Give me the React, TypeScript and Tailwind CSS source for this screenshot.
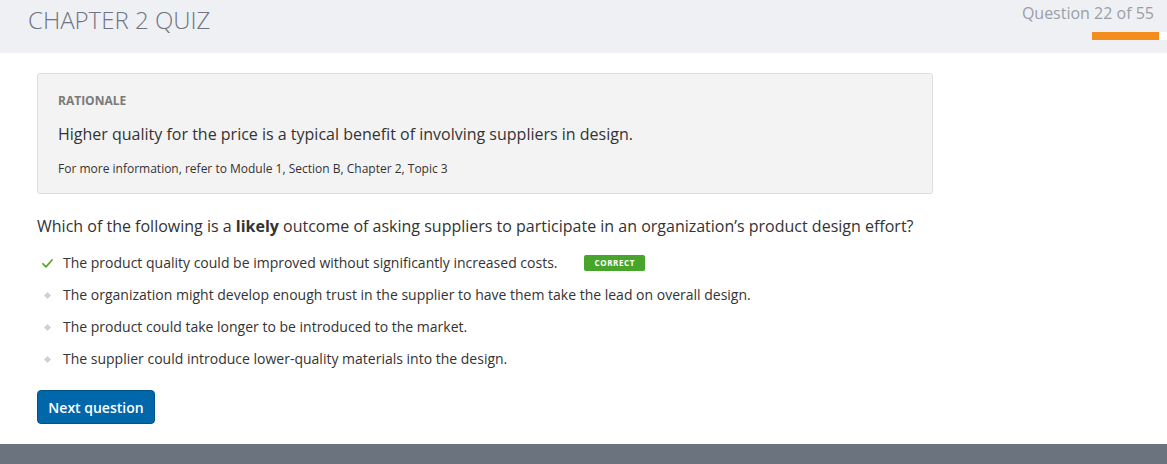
const options = [
  {
    text: "The product quality could be improved without significantly increased costs.",
    correct: true,
  },
  {
    text: "The organization might develop enough trust in the supplier to have them take the lead on overall design.",
    correct: false,
  },
  {
    text: "The product could take longer to be introduced to the market.",
    correct: false,
  },
  {
    text: "The supplier could introduce lower-quality materials into the design.",
    correct: false,
  },
];

const CheckIcon = () => (
  <span className="flex h-3 w-[14px] shrink-0 items-center justify-center">
    <svg width="11" height="9" viewBox="0 0 11 9">
      <path
        d="M1 4.8 L4 7.8 L10 1"
        fill="none"
        stroke="#5fa82d"
        strokeWidth="1.8"
        strokeLinecap="round"
        strokeLinejoin="round"
      />
    </svg>
  </span>
);

const Bullet = () => (
  <span className="flex h-3 w-[14px] shrink-0 items-center justify-center">
    <span className="block h-[5px] w-[5px] rotate-45 bg-[#d2d2d2]" />
  </span>
);

export default function App() {
  return (
    <div className="flex h-[464px] w-full flex-col bg-white font-['Open_Sans',sans-serif]">
      <header className="flex h-[53px] shrink-0 items-start justify-between overflow-hidden bg-[#eff0f4]">
        <h1 className="pl-[28px] pt-[6px] text-[24px] font-light leading-[28px] text-[#6e7480]">
          CHAPTER 2 QUIZ
        </h1>
        <div className="flex flex-col items-end pt-[3px]">
          <span className="pr-[13px] text-[16px] leading-[20px] text-[#9a9ea6]">
            Question 22 of 55
          </span>
          <div className="mt-[9px] flex h-[8px] w-[75px]">
            <div className="h-full w-[67px] bg-[#f48c1e]" />
            <div className="h-full flex-1 bg-white" />
          </div>
        </div>
      </header>

      <main className="flex-1 px-[37px] pt-[20px]">
        <section className="w-[896px] rounded-[3px] border border-[#dedede] bg-[#f3f3f3] px-[20px] pb-[16px] pt-[19px]">
          <div className="text-[12px] font-bold leading-[16px] text-[#7a7a7a]">
            RATIONALE
          </div>
          <p className="mt-[14px] text-[16px] leading-[22px] text-[#333]">
            Higher quality for the price is a typical benefit of involving
            suppliers in design.
          </p>
          <p className="mt-[16px] text-[12px] leading-[16px] text-[#333]">
            For more information, refer to Module 1, Section B, Chapter 2, Topic 3
          </p>
        </section>

        <p className="mt-[21px] text-[16px] leading-[22px] text-[#333]">
          Which of the following is a <strong className="font-bold">likely</strong>{" "}
          outcome of asking suppliers to participate in an organization’s product
          design effort?
        </p>

        <ul className="mt-[16px] flex flex-col gap-[12px]">
          {options.map((o) => (
            <li key={o.text} className="flex h-[20px] items-center pl-[3px]">
              {o.correct ? <CheckIcon /> : <Bullet />}
              <span className="ml-[9px] text-[14px] leading-[20px] text-[#333]">
                {o.text}
              </span>
              {o.correct && (
                <span className="ml-[27px] rounded-[2px] bg-[#48a52c] px-[10px] py-[2px] text-[8px] font-bold leading-[12px] tracking-[0.6px] text-white">
                  CORRECT
                </span>
              )}
            </li>
          ))}
        </ul>

        <button
          type="button"
          className="mt-[21px] h-[34px] w-[118px] rounded-[4px] border border-[#00528a] bg-[#0067ab] text-[14px] font-semibold text-white"
        >
          Next question
        </button>
      </main>

      <footer className="h-[20px] shrink-0 bg-[#6b747e]" />
    </div>
  );
}
